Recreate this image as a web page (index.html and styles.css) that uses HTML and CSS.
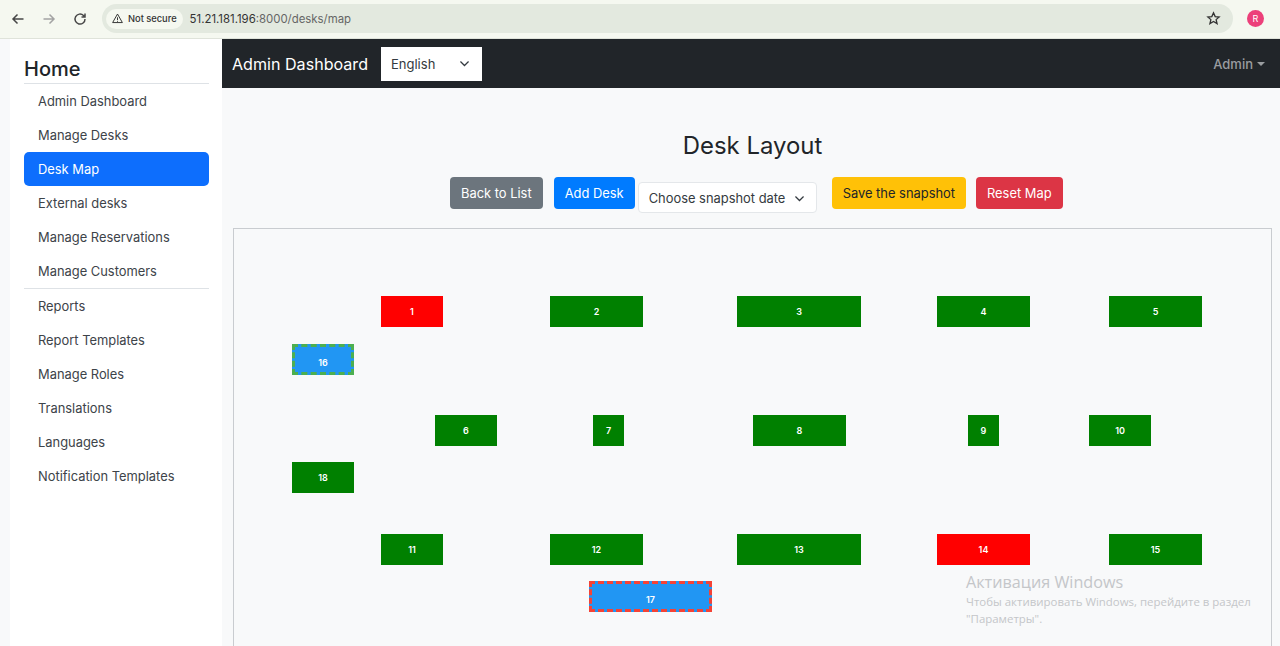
FILE: index.html
```html
<!DOCTYPE html>
<html lang="en">
<head>
    <meta charset="UTF-8">
    <meta name="viewport" content="width=device-width, initial-scale=1.0">
    <title>Desk Layout</title>
    <link rel="stylesheet" href="styles.css">
</head>
<body>
    <div class="chrome">
        <svg class="chrome-icon" viewBox="0 0 16 16"><path d="M13.5 8H3M7.5 3.5 3 8l4.5 4.5"/></svg>
        <svg class="chrome-icon forward" viewBox="0 0 16 16"><path d="M2.5 8H13M8.5 3.5 13 8l-4.500 4.500"/></svg>
        <svg class="chrome-icon" viewBox="0 0 16 16"><path d="M13 8a5 5 0 1 1-1.500-3.500L13 6M13 2.500V6H9.500"/></svg>
        <div class="omnibox">
            <span class="not-secure">
                <svg viewBox="0 0 16 16"><path d="M8 2.500 14 13H2ZM8 6.500v3.500M8 11v1"/></svg>
                Not secure
            </span>
            <span class="url">51.21.181.196<span class="url-port">:8000/desks/map</span></span>
            <svg class="star" viewBox="0 0 16 16"><path d="m8 2 1.800 4 4.200.4-3.200 2.800 1 4.300L8 11.200l-3.800 2.300 1-4.300L2 6.400 6.200 6Z"/></svg>
        </div>
        <span class="avatar">R</span>
    </div>

    <div class="page">
        <aside class="sidebar">
            <h4>Home</h4>
            <nav class="side-nav">
                <a href="#">Admin Dashboard</a>
                <a href="#">Manage Desks</a>
                <a href="#" class="active">Desk Map</a>
                <a href="#">External desks</a>
                <a href="#">Manage Reservations</a>
                <a href="#">Manage Customers</a>
                <hr>
                <a href="#">Reports</a>
                <a href="#">Report Templates</a>
                <a href="#">Manage Roles</a>
                <a href="#">Translations</a>
                <a href="#">Languages</a>
                <a href="#">Notification Templates</a>
            </nav>
        </aside>

        <div class="main">
            <header class="topbar">
                <span class="brand">Admin Dashboard</span>
                <div class="lang-select">English
                    <svg viewBox="0 0 16 16"><path d="m3 5.500 5 5 5-5"/></svg>
                </div>
                <span class="admin-menu">Admin<i class="caret"></i></span>
            </header>

            <section class="content">
                <h2>Desk Layout</h2>
                <div class="toolbar">
                    <a href="#" class="btn btn-gray">Back to List</a>
                    <a href="#" class="btn btn-blue">Add Desk</a>
                    <div class="snapshot-select">Choose snapshot date
                        <svg viewBox="0 0 16 16"><path d="m3 5.500 5 5 5-5"/></svg>
                    </div>
                    <a href="#" class="btn btn-yellow">Save the snapshot</a>
                    <a href="#" class="btn btn-red">Reset Map</a>
                </div>

                <div class="map">
                    <div class="desk red" style="left:147px;top:67px;width:62px">1</div>
                    <div class="desk" style="left:316px;top:67px;width:93px">2</div>
                    <div class="desk" style="left:503px;top:67px;width:124px">3</div>
                    <div class="desk" style="left:703px;top:67px;width:93px">4</div>
                    <div class="desk" style="left:875px;top:67px;width:93px">5</div>
                    <div class="desk external green-dash" style="left:58px;top:115px;width:62px">16</div>
                    <div class="desk" style="left:201px;top:186px;width:62px">6</div>
                    <div class="desk" style="left:359px;top:186px;width:31px">7</div>
                    <div class="desk" style="left:519px;top:186px;width:93px">8</div>
                    <div class="desk" style="left:734px;top:186px;width:31px">9</div>
                    <div class="desk" style="left:855px;top:186px;width:62px">10</div>
                    <div class="desk" style="left:58px;top:233px;width:62px">18</div>
                    <div class="desk" style="left:147px;top:305px;width:62px">11</div>
                    <div class="desk" style="left:316px;top:305px;width:93px">12</div>
                    <div class="desk" style="left:503px;top:305px;width:124px">13</div>
                    <div class="desk red" style="left:703px;top:305px;width:93px">14</div>
                    <div class="desk" style="left:875px;top:305px;width:93px">15</div>
                    <div class="desk external red-dash" style="left:355px;top:352px;width:123px">17</div>
                </div>
            </section>
        </div>
    </div>

    <div class="watermark">
        <div class="watermark-title">Активация Windows</div>
        <div>Чтобы активировать Windows, перейдите в раздел</div>
        <div>"Параметры".</div>
    </div>
</body>
</html>
```

FILE: styles.css
```css
* {
    box-sizing: border-box;
}
html, body {
    height: 100%;
}
body {
    font-family: 'Inter', sans-serif;
    background-color: #f8f9fa;
    color: #212529;
    margin: 0;
    overflow: hidden;
    position: relative;
}
a {
    text-decoration: none;
}

/* browser bar */
.chrome {
    height: 39px;
    background-color: #f5f8f0;
    border-bottom: 1px solid #dfe3da;
    display: flex;
    align-items: center;
    padding: 0 10px 1px 10px;
}
.chrome-icon {
    width: 16px;
    height: 16px;
    margin-right: 15px;
    fill: none;
    stroke: #474747;
    stroke-width: 1.5;
}
.chrome-icon.forward {
    stroke: #a3a3a3;
}
.omnibox {
    width: 1131px;
    height: 29px;
    margin-left: -1px;
    background-color: #e3e9df;
    border-radius: 15px;
    display: flex;
    align-items: center;
    padding-left: 4px;
    font-size: 11.400px;
}
.not-secure {
    height: 20px;
    padding: 0 6px 0 5px;
    background-color: #f5f8f0;
    border-radius: 10px;
    display: flex;
    align-items: center;
    gap: 4px;
    font-size: 9.300px;
    font-weight: 500;
    color: #333;
}
.not-secure svg {
    width: 13px;
    height: 13px;
    fill: none;
    stroke: #333;
    stroke-width: 1.200;
}
.url {
    margin-left: 7px;
    color: #333;
}
.url-port {
    color: #666;
}
.star {
    width: 15px;
    height: 15px;
    margin-left: auto;
    margin-right: 12px;
    fill: none;
    stroke: #333;
    stroke-width: 1.400;
}
.avatar {
    width: 17px;
    height: 17px;
    margin-left: 14px;
    border-radius: 50%;
    background-color: #ec407a;
    color: #fff;
    font-size: 9px;
    display: flex;
    align-items: center;
    justify-content: center;
}

/* page */
.page {
    display: flex;
    height: 607px;
    padding-left: 10px;
}
.sidebar {
    width: 212px;
    flex-shrink: 0;
    background-color: #fff;
    padding: 17px 13px 0 14px;
}
.sidebar h4 {
    margin: 0;
    font-size: 20px;
    font-weight: 500;
    line-height: 27px;
    border-bottom: 1px solid #dee2e6;
}
.side-nav {
    display: flex;
    flex-direction: column;
}
.side-nav a {
    height: 34px;
    padding: 0 14px;
    display: flex;
    align-items: center;
    font-size: 12.900px;
    color: #3d4349;
    border-radius: 5px;
}
.side-nav a.active {
    background-color: #0d6efd;
    color: #fff;
}
.side-nav hr {
    width: 100%;
    margin: 0;
    border: 0;
    border-top: 1px solid #dee2e6;
}

.main {
    flex: 1;
    min-width: 0;
}
.topbar {
    height: 49px;
    background-color: #212529;
    display: flex;
    align-items: center;
    padding: 0 15px 0 10px;
}
.brand {
    font-size: 16.100px;
    color: #fff;
    margin-right: 13px;
}
.lang-select {
    width: 101px;
    height: 34px;
    background-color: #fff;
    color: #343a40;
    font-size: 13px;
    display: flex;
    align-items: center;
    justify-content: space-between;
    padding: 0 11px 0 10px;
}
.lang-select svg, .snapshot-select svg {
    width: 13px;
    height: 13px;
    fill: none;
    stroke: #343a40;
    stroke-width: 1.500;
}
.admin-menu {
    margin-left: auto;
    font-size: 13px;
    font-weight: 500;
    color: #9a9da0;
    display: flex;
    align-items: center;
}
.caret {
    margin-left: 4px;
    border-top: 4px solid #9a9da0;
    border-left: 4px solid transparent;
    border-right: 4px solid transparent;
}

.content {
    padding: 0 8px 0 11px;
}
.content h2 {
    margin: 0;
    padding-top: 40px;
    text-align: center;
    font-size: 23.900px;
    font-weight: 400;
    line-height: 36px;
    height: 76px;
}
.toolbar {
    height: 64px;
    display: flex;
    align-items: flex-start;
    padding: 13px 0 0 217px;
}
.btn {
    height: 32px;
    padding: 0 11px;
    display: flex;
    align-items: center;
    border-radius: 4px;
    font-size: 12.900px;
    color: #fff;
}
.btn-gray {
    background-color: #6c757d;
    margin-right: 11px;
}
.btn-blue {
    background-color: #007bff;
    margin-right: 3px;
}
.btn-yellow {
    background-color: #ffc107;
    color: #212529;
    margin-right: 10px;
}
.btn-red {
    background-color: #dc3545;
}
.snapshot-select {
    width: 179px;
    height: 31px;
    margin-top: 5px;
    margin-right: 15px;
    padding: 1px 10px 0 10px;
    background-color: #fff;
    border: 1px solid #e4e7ea;
    border-radius: 4px;
    font-size: 12.900px;
    color: #343a40;
    display: flex;
    align-items: center;
    justify-content: space-between;
}

/* map */
.map {
    position: relative;
    height: 418px;
    border: 1px solid #c9ccd0;
    border-bottom: 0;
}
.desk {
    position: absolute;
    height: 31px;
    background-color: #008000;
    color: #fff;
    font-size: 9px;
    font-weight: 600;
    display: flex;
    align-items: center;
    justify-content: center;
}
.desk.red {
    background-color: #ff0000;
}
.desk.external {
    background-color: #2196f3;
    padding-top: 6px;
}
.green-dash {
    border: 3px dashed #4caf50;
}
.red-dash {
    border: 3px dashed #f44336;
}

.watermark {
    position: absolute;
    left: 966px;
    top: 573px;
    font-family: 'Open Sans', sans-serif;
    font-size: 11.450px;
    line-height: 17px;
    color: #c4c6c9;
}
.watermark-title {
    font-size: 16.200px;
    line-height: 19px;
    margin-bottom: 1px;
}
```
